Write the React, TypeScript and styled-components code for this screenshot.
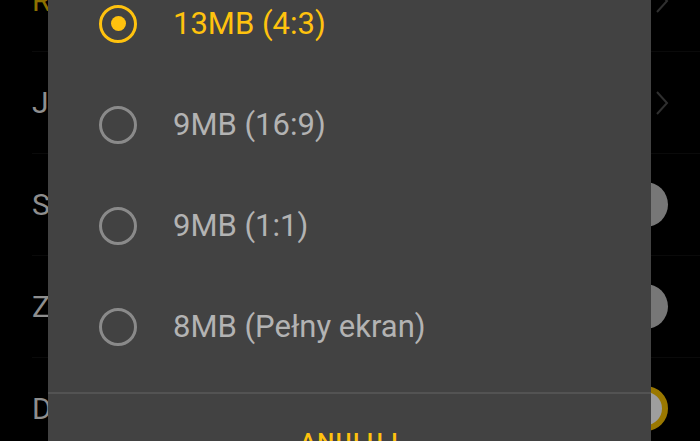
import { useState } from 'react'
import styled, { createGlobalStyle } from 'styled-components'

const GlobalStyle = createGlobalStyle`
  html, body {
    margin: 0;
    padding: 0;
    background: #000;
  }
  body {
    font-family: Roboto, "Noto Sans", "Liberation Sans", sans-serif;
  }
`

type SettingKind = 'chevron' | 'off' | 'on'

interface Setting {
  label: string
  kind: SettingKind
  accent?: boolean
}

const settings: Setting[] = [
  { label: 'Rozmiar zdjęcia', kind: 'chevron', accent: true },
  { label: 'Jakość wideo', kind: 'chevron' },
  { label: 'Siatka', kind: 'off' },
  { label: 'Zapis lokalizacji', kind: 'off' },
  { label: 'Dźwięk migawki', kind: 'on' }
]

const sizes = ['13MB (4:3)', '9MB (16:9)', '9MB (1:1)', '8MB (Pełny ekran)']

const App = () => {
  const [selected, setSelected] = useState(0)

  return (
    <>
      <GlobalStyle />
      <Screen>
        <SettingsList>
          {settings.map((s) => (
            <SettingRow key={s.label}>
              <SettingLabel $accent={s.accent}>{s.label}</SettingLabel>
              {s.kind === 'chevron' ? (
                <Chevron width="14" height="26" viewBox="0 0 14 26">
                  <polyline points="2,2 12,13 2,24" fill="none" stroke="#2f2f2f" strokeWidth="2" />
                </Chevron>
              ) : (
                <Toggle>
                  <Knob $on={s.kind === 'on'} />
                </Toggle>
              )}
            </SettingRow>
          ))}
        </SettingsList>

        <Dialog>
          <OptionList>
            {sizes.map((label, i) => (
              <Option key={label} onClick={() => setSelected(i)}>
                <Radio $checked={i === selected} />
                <OptionText $checked={i === selected}>{label}</OptionText>
              </Option>
            ))}
          </OptionList>
          <Actions>
            <CancelButton>ANULUJ</CancelButton>
          </Actions>
        </Dialog>
      </Screen>
    </>
  )
}

export default App

const Screen = styled.div`
  position: relative;
  width: 700px;
  height: 441px;
  overflow: hidden;
  background: #000;
`

const SettingsList = styled.div`
  display: flex;
  flex-direction: column;
  margin-top: -50px;
  padding-left: 32px;
`

const SettingRow = styled.div`
  height: 102px;
  display: flex;
  align-items: center;
  justify-content: space-between;
  padding-right: 30px;
  box-sizing: border-box;
  border-bottom: 1px solid #0a0a0a;
`

const SettingLabel = styled.span<{ $accent?: boolean }>`
  font-size: 30px;
  color: ${({ $accent }) => ($accent ? '#8d7000' : '#8e8e8e')};
`

const Chevron = styled.svg`
  margin-right: 1px;
`

const Toggle = styled.div`
  width: 80px;
  height: 30px;
  border-radius: 15px;
  background: #0a0a0a;
  display: flex;
  align-items: center;
  justify-content: flex-end;
  margin-right: 2px;
`

const Knob = styled.div<{ $on: boolean }>`
  width: 45px;
  height: 45px;
  border-radius: 50%;
  box-sizing: border-box;
  background: ${({ $on }) => ($on ? '#9e9e9e' : '#777')};
  border: ${({ $on }) => ($on ? '6px solid #9a7800' : 'none')};
`

const Dialog = styled.div`
  position: absolute;
  left: 48px;
  top: -27px;
  width: 603px;
  background: #424242;
  display: flex;
  flex-direction: column;
`

const OptionList = styled.div`
  display: flex;
  flex-direction: column;
  padding-bottom: 15px;
  border-bottom: 2px solid #535353;
`

const Option = styled.div`
  height: 101px;
  display: flex;
  align-items: center;
  padding-left: 51px;
  gap: 36px;
  cursor: pointer;
`

const Radio = styled.div<{ $checked: boolean }>`
  width: 38px;
  height: 38px;
  border-radius: 50%;
  box-sizing: border-box;
  border: 3px solid ${({ $checked }) => ($checked ? '#ffc20e' : '#8a8a8a')};
  display: flex;
  align-items: center;
  justify-content: center;
  flex-shrink: 0;

  &::after {
    content: '';
    width: 15px;
    height: 15px;
    border-radius: 50%;
    background: #ffc20e;
    display: ${({ $checked }) => ($checked ? 'block' : 'none')};
  }
`

const OptionText = styled.span<{ $checked: boolean }>`
  font-size: 31px;
  color: ${({ $checked }) => ($checked ? '#ffc20e' : '#b3b3b3')};
`

const Actions = styled.div`
  display: flex;
  justify-content: center;
  padding-top: 34px;
  padding-bottom: 20px;
`

const CancelButton = styled.button`
  background: none;
  border: none;
  padding: 0;
  font-family: Roboto, "Noto Sans", "Liberation Sans", sans-serif;
  font-size: 24px;
  font-weight: 500;
  letter-spacing: 1.5px;
  color: #ffc20e;
  line-height: 28px;
  cursor: pointer;
`
